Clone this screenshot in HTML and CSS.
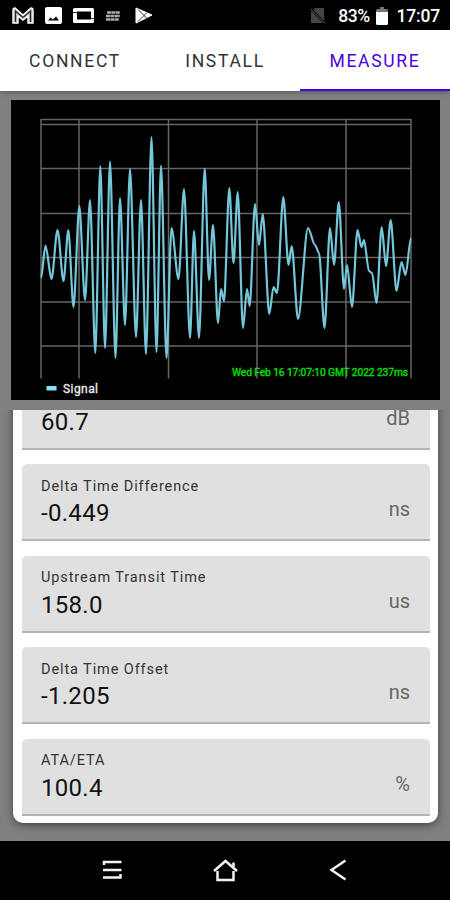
FILE: index.html
```
<!DOCTYPE html>
<html lang="en">
<head>
    <meta charset="UTF-8">
    <meta name="viewport" content="width=device-width, initial-scale=1.0">
    <title>Measure</title>
    <link rel="stylesheet" href="styles.css">
</head>
<body>
    <div class="status-bar">
        <div class="status-icons">
            <!-- Mail -->
            <svg width="22" height="18" viewBox="0 0 22 18">
                <path d="M1 16V3Q1 1 3 1L11 8L19 1Q21 1 21 3V16H16V9L11 13L6 9V16Z" fill="#bbb" stroke="#fff" stroke-width="1.4"/>
                <path d="M3.500 15V4L11 10.500L18.500 4V15" fill="none" stroke="#222" stroke-width="1.2"/>
            </svg>
            <!-- Picture -->
            <svg class="icon-picture" width="17" height="17" viewBox="0 0 17 17">
                <rect width="17" height="17" rx="2" fill="#fff"/>
                <path d="M3 13.500L5.500 10.500L8 12.500L11 9.500L14 13.500Z" fill="#000"/>
            </svg>
            <!-- Screen -->
            <svg class="icon-screen" width="23" height="17" viewBox="0 0 23 17">
                <rect x="1" y="1" width="21" height="15" rx="1.500" fill="#fff"/>
                <rect x="5" y="4.500" width="14" height="8" fill="#000"/>
                <path d="M1 5.500H6M17 11.500H22" stroke="#000" stroke-width="0.8"/>
            </svg>
            <svg class="icon-lines" width="14" height="10" viewBox="0 0 14 10">
                <path d="M1 1.500H14M0 5H14M0 8.500H13" stroke="#aaa" stroke-width="2.300" stroke-dasharray="4 .4"/>
            </svg>
            <!-- Play store -->
            <svg class="icon-play" width="18" height="17" viewBox="0 0 18 17">
                <path d="M1 1L17 8L1 16Z" fill="#fff" stroke="#fff" stroke-linejoin="round"/>
                <path d="M3 2.500L12 11.500M3 14.500L12 5.500" stroke="#333" stroke-width="1"/>
            </svg>
        </div>
        <div class="status-info">
            <svg class="icon-sim" width="16" height="17" viewBox="0 0 16 17">
                <path d="M5 1H14V16H1V5Z" fill="#454545"/>
                <path d="M0 1L15 16.500" stroke="#000" stroke-width="2.500"/>
                <path d="M0 1.500L15 16.500" stroke="#666" stroke-width="1"/>
            </svg>
            <span class="battery-text">83%</span>
            <svg class="icon-battery" width="12" height="18" viewBox="0 0 12 18">
                <path d="M4 0H8V2H10.500Q12 2 12 3.500V5H0V3.500Q0 2 1.500 2H4Z" fill="#777"/>
                <path d="M0 5H12V16.500Q12 18 10.500 18H1.500Q0 18 0 16.500Z" fill="#fff"/>
            </svg>
            <span class="clock">17:07</span>
        </div>
    </div>

    <nav class="tabs">
        <a class="tab">CONNECT</a>
        <a class="tab">INSTALL</a>
        <a class="tab active">MEASURE</a>
    </nav>

    <main class="content">
        <div class="chart">
            <svg width="429" height="300" viewBox="11 100 429 300">
                <path class="grid" d="M41 119.500H411M41 124.500H411M41 168.500H411M41 213.500H411M41 257.500H411M41 302H411M41 346H411"/>
                <path class="grid" d="M41 119V378.500M79 119V378.500M168.500 119V378.500M257 119V378.500M346 119V378.500M411 119V378.500"/>
                <path class="signal" id="signal"/>
                <text class="timestamp" x="232" y="376" textLength="176">Wed Feb 16 17:07:10 GMT 2022 237ms</text>
                <rect x="46.500" y="386" width="10" height="4.500" fill="#85e4f5"/>
                <text class="legend" x="63" y="393" textLength="35">Signal</text>
            </svg>
        </div>

        <div class="scroll-area">
            <div class="card">
                <div class="field">
                    <div class="label"></div>
                    <div class="value">60.7</div>
                    <div class="unit">dB</div>
                </div>
                <div class="field">
                    <div class="label">Delta Time Difference</div>
                    <div class="value">-0.449</div>
                    <div class="unit">ns</div>
                </div>
                <div class="field">
                    <div class="label">Upstream Transit Time</div>
                    <div class="value">158.0</div>
                    <div class="unit">us</div>
                </div>
                <div class="field">
                    <div class="label">Delta Time Offset</div>
                    <div class="value">-1.205</div>
                    <div class="unit">ns</div>
                </div>
                <div class="field">
                    <div class="label">ATA/ETA</div>
                    <div class="value">100.4</div>
                    <div class="unit">%</div>
                </div>
            </div>
        </div>
    </main>

    <div class="nav-bar">
        <svg width="22" height="22" viewBox="0 0 22 22">
            <path d="M3 6V3H20.500M2 11H20.500M2 18.500H19.500V15"/>
        </svg>
        <svg width="26" height="24" viewBox="0 0 26 24">
            <path d="M2 13L13.500 3L25 13M5.500 13V22H21.500V13M21.500 9V4.500"/>
        </svg>
        <svg width="22" height="22" viewBox="0 0 22 22">
            <path d="M18.500 1.500L4.500 11L18.500 20.500"/>
        </svg>
    </div>

    <script src="script.js"></script>
</body>
</html>
```
FILE: styles.css
```
body {
    margin: 0;
    width: 450px;
    height: 900px;
    display: flex;
    flex-direction: column;
    font-family: Roboto, sans-serif;
    background-color: #808080;
    overflow: hidden;
}

svg {
    display: block;
    flex: none;
}

.status-bar {
    height: 30px;
    display: flex;
    justify-content: space-between;
    align-items: center;
    padding: 1px 10px 0 12px;
    box-sizing: border-box;
    background-color: #000;
    color: #fff;
    font-size: 17.500px;
    font-weight: 500;
}

.status-icons, .status-info {
    display: flex;
    align-items: center;
}

.icon-picture {
    margin-left: 11px;
}

.icon-screen {
    margin-left: 10px;
}

.icon-lines {
    margin-left: 11px;
}

.icon-play {
    margin-left: 15px;
}

.battery-text {
    margin-left: 12px;
    padding-top: 1px;
    letter-spacing: -0.5px;
}

.icon-battery {
    margin-left: 6px;
}

.clock {
    margin-left: 9px;
    padding-top: 1px;
    letter-spacing: -0.2px;
}

.tabs {
    height: 60.500px;
    display: flex;
    background-color: #fff;
    box-shadow: 0 1px 5px rgba(0, 0, 0, 0.35);
}

.tab {
    flex: 1;
    display: flex;
    align-items: center;
    justify-content: center;
    box-sizing: border-box;
    padding-top: 4px;
    border-bottom: 2.500px solid transparent;
    font-size: 17.500px;
    letter-spacing: 1.7px;
    color: #333;
}

.tab.active {
    color: #4b00dc;
    border-bottom-color: #4b00dc;
}

.content {
    flex: 1;
    min-height: 0;
    display: flex;
    flex-direction: column;
}

.chart {
    margin: 9.500px 10px 10px 11px;
    background-color: #000;
}

.grid {
    stroke: #666;
    stroke-width: 1.5;
    fill: none;
}

.signal {
    stroke: #74c6d8;
    stroke-width: 2.2;
    stroke-linejoin: round;
    fill: none;
}

.timestamp {
    font-size: 10.200px;
    fill: #00e000;
    stroke: #00e000;
    stroke-width: 0.35;
}

.legend {
    font-size: 12px;
    fill: #eee;
    stroke: #eee;
    stroke-width: 0.3;
}

.scroll-area {
    flex: 1;
    min-height: 0;
    display: flex;
    flex-direction: column;
    justify-content: flex-end;
    overflow: hidden;
    padding: 0 12px 17.500px 13px;
}

.card {
    display: flex;
    flex-direction: column;
    gap: 14.400px;
    padding: 8px 8px 7.500px 9px;
    background-color: #fff;
    border-radius: 10px;
    box-shadow: 0 2px 9px rgba(0, 0, 0, 0.5);
}

.field {
    flex: none;
    display: grid;
    grid-template-columns: 1fr auto;
    grid-template-rows: 17px 30px;
    align-content: start;
    row-gap: 3.500px;
    height: 77px;
    box-sizing: border-box;
    padding: 13.500px 20px 0 19px;
    background-color: #e0e0e0;
    border-bottom: 2px solid #b4b4b4;
    border-radius: 5px 5px 0 0;
}

.label {
    grid-column: 1 / 3;
    font-size: 14.500px;
    line-height: 17px;
    letter-spacing: 0.9px;
    color: #333;
}

.value {
    font-size: 24px;
    line-height: 30px;
    letter-spacing: 0.3px;
    color: #111;
}

.unit {
    font-size: 20px;
    line-height: 23px;
    color: #666;
}

.nav-bar {
    height: 59.500px;
    display: flex;
    align-items: center;
    justify-content: center;
    gap: 89px;
    background-color: #000;
}

.nav-bar path {
    fill: none;
    stroke: #f2f2f2;
    stroke-width: 2.500;
}
```
FILE: script.js
```
// Turning points of the received signal
const points = [
    [41, 278], [45.5, 245.5], [51.5, 279], [57.5, 230], [63.5, 281], [68.3, 230],
    [73.5, 307], [79.3, 206], [85, 300], [90, 200], [95.3, 353], [100.3, 166],
    [105, 348], [110, 161.5], [115.5, 358], [120, 198], [125, 325], [130, 169],
    [136, 337], [141, 200], [146, 354], [151.5, 137], [156.5, 352], [161, 165.5],
    [166.5, 358], [171.5, 228], [178.5, 279], [184, 189], [190, 338], [194, 231],
    [199, 338], [204.7, 168.5], [209, 280], [213, 225], [218, 323], [221, 289],
    [224, 301], [229.3, 188], [233.5, 263], [237.7, 192], [243, 328], [247, 289],
    [249.7, 306], [255, 204], [259, 245], [262.7, 214], [269.3, 314], [273.5, 287],
    [277, 293], [283.3, 197], [288.5, 265], [291.7, 246], [298, 319], [308, 228],
    [315, 245], [319, 253], [324.5, 328], [330, 228], [334, 265], [338.8, 202],
    [344, 289], [347, 265], [352, 307], [357.5, 230], [361.5, 247], [364, 240],
    [369, 271], [372, 273], [376.5, 303], [381.7, 227], [386, 266], [390.7, 220],
    [396.5, 291], [401.5, 262], [405.5, 275], [411, 238]
];

let d = `M${points[0][0]} ${points[0][1]}`;
for (let i = 1; i < points.length; i++) {
    const [x0, y0] = points[i - 1];
    const [x1, y1] = points[i];
    const dx = (x1 - x0) * 0.3;
    d += `C${x0 + dx} ${y0} ${x1 - dx} ${y1} ${x1} ${y1}`;
}
document.getElementById('signal').setAttribute('d', d);
```
